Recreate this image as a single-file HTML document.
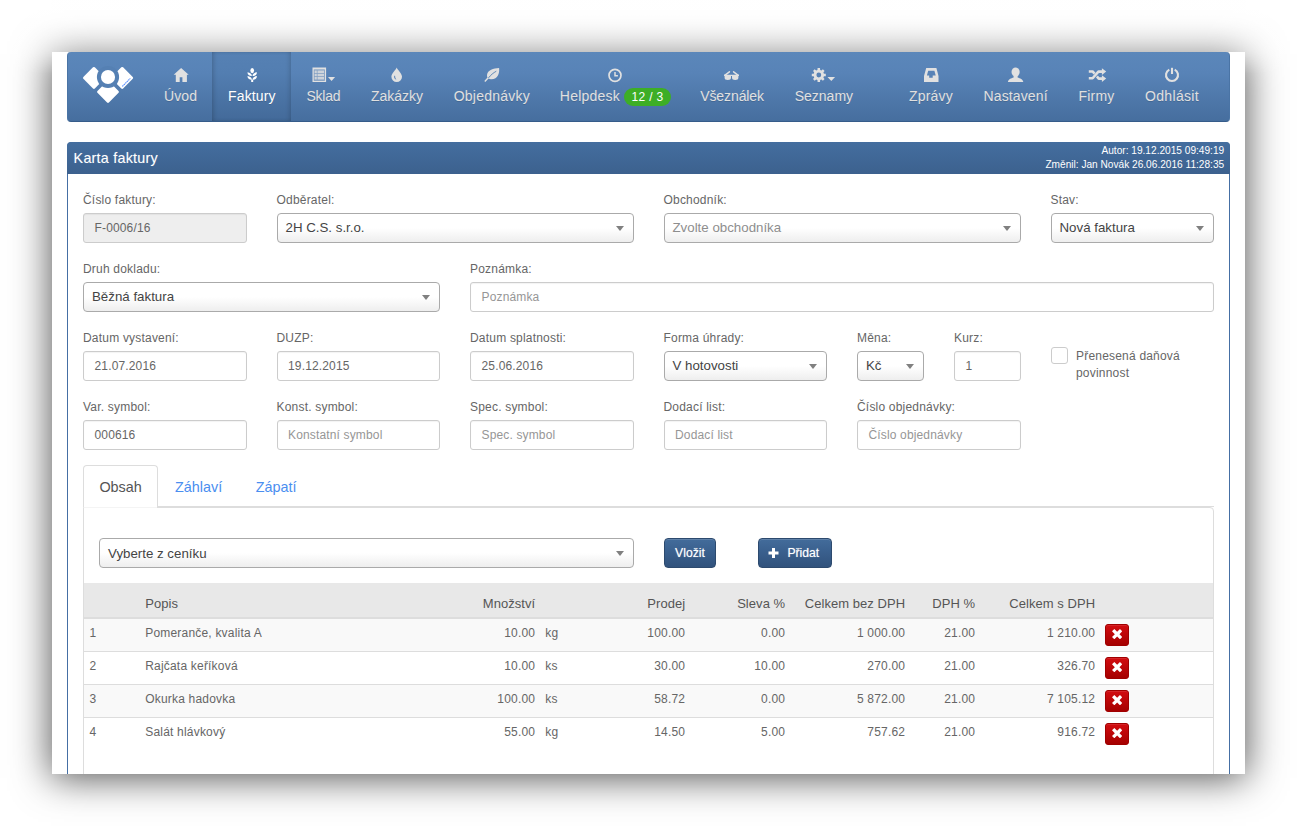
<!DOCTYPE html>
<html lang="cs">
<head>
<meta charset="utf-8">
<title>Karta faktury</title>
<style>
*{box-sizing:border-box;margin:0;padding:0}
html,body{width:1297px;height:826px;background:#fff;overflow:hidden}
body{font-family:"Liberation Sans",sans-serif;font-size:12px;color:#666;position:relative}
.frame{position:absolute;left:52px;top:52px;width:1193px;height:722px;background:#fff;overflow:hidden;z-index:2}
.shadow{position:absolute;left:52px;top:52px;width:1193px;height:722px;box-shadow:0 3px 36px 1px rgba(0,0,0,.68);z-index:0}
.toplight{position:absolute;left:0;top:0;width:1297px;height:74px;z-index:1;background:linear-gradient(to bottom,rgba(255,255,255,.7) 0,rgba(255,255,255,.5) 18px,rgba(255,255,255,.3) 30px,rgba(255,255,255,.27) 52px,rgba(255,255,255,0) 74px)}
.abs{position:absolute}
/* navbar */
.navbar{position:absolute;left:15px;top:0;width:1163px;height:69.5px;border-radius:4px;background:linear-gradient(to bottom,#5b87ba 0,#5883b7 30%,#466e9e 100%);border:1px solid #365c8a;border-top:0;border-left-color:#4a74a5;border-right-color:#4a74a5}
.badge{display:inline-block;position:relative;top:1px;background:#3dae26;color:#fff;border-radius:10px;font-size:12px;line-height:18px;height:18px;padding:0 7.5px;vertical-align:1px;margin-left:0;text-shadow:none;letter-spacing:.3px}
/* panel */
.panel{position:absolute;left:15px;top:90px;width:1163px;height:700px;border:1px solid #456fa4;border-radius:4px 4px 0 0}
.panel-heading{position:absolute;left:-1px;top:-1px;width:1163px;height:31.6px;border-radius:4px 4px 0 0;background:linear-gradient(to bottom,#446e9f 0,#3c618e 100%);color:#fff}
.panel-title{position:absolute;left:6.6px;top:6px;letter-spacing:.25px;font-size:14.3px;line-height:20px;color:#fff;text-shadow:0 0 1px rgba(255,255,255,.3)}
.panel-meta{position:absolute;right:5.8px;top:2.4px;text-align:right;font-size:10.15px;line-height:13.8px;color:#fff;white-space:nowrap}
/* form */
label.l{position:absolute;font-size:12px;letter-spacing:.2px;margin-top:.7px;line-height:16px;color:#666;white-space:nowrap;font-weight:normal}
.inp{position:absolute;letter-spacing:.15px;height:29.4px;border:1px solid #ccc;border-radius:3px;background:#fff;font-size:12px;line-height:28.7px;padding-left:10.5px;color:#666;white-space:nowrap;overflow:hidden;box-shadow:inset 0 1px 1px rgba(0,0,0,.05)}
.inp.dis{background:#eee}
.inp.ph{color:#969696}
.sel{position:absolute;height:29.4px;border:1px solid #aaa;border-radius:4px;background:linear-gradient(to bottom,#fff 50%,#eee 100%);font-size:13.3px;line-height:27px;padding-left:8px;color:#444;white-space:nowrap;overflow:hidden}
.sel.ph{color:#8e8e8e}
.sel:after{content:"";position:absolute;right:9px;top:12px;border-style:solid;border-width:5px 4px 0 4px;border-color:#808080 transparent transparent transparent}

/* grid helpers (frame coords = abs-52) */
.c1{left:31px}.c2{left:224.5px}.c3{left:418px}.c4{left:611.5px}.c5{left:805px}.c6{left:902px}.c7{left:998.5px}
.w1{width:66.75px}.w2{width:163.5px}.w4{width:357px}.w8{width:744px}
.i1{top:161.3px}.i2{top:230.3px}.i3{top:299.3px}.i4{top:368.3px}
.l1{top:139px}.l2{top:208.5px}.l3{top:277.5px}.l4{top:346.5px}

.chk{position:absolute;left:999px;top:295.3px;width:17px;height:17px;border:1px solid #ccc;border-radius:3px;background:#fff}
label.chkl{left:1024px;top:295.4px;line-height:17.4px}
/* tabs */
.tabline{position:absolute;left:31.4px;top:454px;width:1130.6px;height:1px;background:#ddd}
.tab{position:absolute;top:413px;height:42px;font-size:14.4px;line-height:20px;padding:11.5px 0 0 0;text-align:center;color:#4a8ef0;white-space:nowrap}
.tab.active{left:31.4px;width:74.4px;border:1px solid #ddd;border-bottom:0;border-radius:4px 4px 0 0;background:#fff;color:#555;padding-top:10.5px}
.tabbox{position:absolute;left:31.4px;top:455px;width:1130.6px;height:300px;border:1px solid #ddd;border-radius:0 4px 0 0}
.btn{position:absolute;top:486.3px;height:29.5px;border:1px solid #2d4a6e;border-radius:4px;background:linear-gradient(to bottom,#436c9b 0,#3a608e 45%,#31527c 100%);color:#fff;font-size:12.2px;line-height:28.5px;text-align:center;white-space:nowrap;text-shadow:0 0 1px rgba(255,255,255,.55);box-shadow:inset 0 1px 0 rgba(255,255,255,.15)}
/* table */
table.t{position:absolute;left:32.4px;top:531.3px;width:1128.8px;border-collapse:collapse;table-layout:fixed;font-size:12px;letter-spacing:.2px;color:#666}
table.t th{height:34.9px;background:#e8e8e8;border-bottom:2px solid #ddd;font-weight:normal;font-size:13px;letter-spacing:.05px;color:#555;padding:7px 5px 0 5px;text-align:right;white-space:nowrap}
table.t td{height:33.05px;border-top:1px solid #ddd;padding:0 5px 4px 5px;text-align:right;white-space:nowrap;vertical-align:middle;line-height:16px}
table.t tr.odd td{background:#f9f9f9}
table.t .tl{text-align:left}
.del{display:block;position:relative;width:24px;height:22px;margin-top:4.5px;border:1px solid #a00000;border-radius:3px;background:linear-gradient(to bottom,#d20c10 0,#a50000 100%);box-shadow:inset 0 1px 0 rgba(255,255,255,.1)}
.del svg{position:absolute;left:5.9px;top:3.7px;width:10.3px;height:10.3px;fill:#fff}

.navsvg{position:absolute;left:0;top:0;display:block}
.navact{position:absolute;left:160px;top:0;width:78.8px;height:69px;background:linear-gradient(to bottom,#5681b4 0,#537eb1 30%,#436a99 100%);box-shadow:inset 3px 0 5px -2px rgba(0,0,0,.22),inset -3px 0 5px -2px rgba(0,0,0,.18)}
.nl{position:absolute;top:34px;width:160px;text-align:center;font-size:14px;line-height:20px;color:#e0e0e0;white-space:nowrap;text-shadow:0 1px 0 rgba(0,0,0,.15)}
.nl.on{color:#fff}
</style>
</head>
<body>
<div class="shadow"></div>
<div class="toplight"></div>
<div class="frame">

<div class="navbar" id="navbar"></div>
<div class="navact"></div>
<svg class="navsvg" viewBox="52 52 1193 72" width="1193" height="72"><g fill="#fff"><rect x="-8.1" y="-8.1" width="16.2" height="16.2" rx="1.3" transform="translate(93.9,77.9) rotate(45)"/><rect x="-8.1" y="-8.1" width="16.2" height="16.2" rx="1.3" transform="translate(122.2,77.9) rotate(45)"/><rect x="-8.1" y="-8.1" width="16.2" height="16.2" rx="1.3" transform="translate(108,91.9) rotate(45)"/></g><circle cx="108" cy="77" r="11.1" fill="#5580b3"/><circle cx="108" cy="77" r="7.05" fill="#fff"/><path d="M122.3 86.4 L130.3 78.4" stroke="#4a86ff" stroke-width="1.1" stroke-dasharray="1.6 .5" fill="none"/><g transform="translate(173.7,67.9)" fill="#e1e1e1"><path d="M7.4 0 L15 6.9 H13.2 V14.1 H8.7 V9.4 H6 V14.1 H2.1 V6.9 H0Z"/></g><g transform="translate(247.9,67.9)" fill="#fff"><ellipse cx="4.3" cy="2.7" rx="1.85" ry="2.65"/><path d="M4.6 8.1 C4.6 6.2 6.5 4.6 9 4.4 C9.1 6.6 7.2 8.2 4.6 8.1Z M4 8.1 C4 6.2 2.1 4.6 -0.4 4.4 C-0.5 6.6 1.4 8.2 4 8.1Z M4.6 11.9 C4.6 10 6.5 8.4 9 8.2 C9.1 10.4 7.2 12 4.6 11.9Z M4 11.9 C4 10 2.1 8.4 -0.4 8.2 C-0.5 10.4 1.4 12 4 11.9Z M3.3 11.8 H5.3 V14.2 H3.3Z"/></g><g transform="translate(312.5,67.6)" fill="#e1e1e1"><path fill-rule="evenodd" d="M0 0 H13.6 V14.4 H0Z M1.3 2 V13.1 H12.3 V2Z"/><rect x="1.3" y="2" width="11" height="11.1" opacity=".3"/><path d="M2.1 2.9 H4.3 V5.3 H2.1Z M5 2.9 H11.5 V5.3 H5Z M2.1 6.2 H4.3 V8.6 H2.1Z M5 6.2 H11.5 V8.6 H5Z M2.1 9.5 H4.3 V11.9 H2.1Z M5 9.5 H11.5 V11.9 H5Z" opacity=".8"/><path d="M15.5 9.3 H22.6 L19.05 13.5Z"/></g><g transform="translate(391.4,67.4)" fill="#e1e1e1"><path fill-rule="evenodd" d="M5.3 0 C4.6 2.2 0 6 0 9.4 A5.3 5.2 0 0 0 10.6 9.4 C10.6 6 6 2.2 5.3 0Z M2.9 8.3 C2.3 10.2 3.2 11.9 5.2 12.2 C4.2 11.4 3.6 10 3.7 8.3Z"/></g><g transform="translate(484.3,67.9)"><path fill="#e1e1e1" d="M14.8 0 C15.4 5.2 13.6 11.6 6.6 11.3 C5.7 11.3 4.9 11 4.3 10.6 L1 14.1 L0 13.2 L3.2 9.6 C2.8 8.9 2.6 8 2.7 7 C3.3 2 9 0.2 14.8 0Z"/><path d="M4.2 10 C6.5 7 9 5 12 3.3" fill="none" stroke="#5480b3" stroke-width=".9"/></g><g fill="none" stroke="#e1e1e1"><circle cx="615" cy="75.3" r="6" stroke-width="1.7"/><path d="M615 71.9 V75.7 H617.9" stroke-width="1.5"/></g><g transform="translate(724,71)" fill="#e1e1e1"><path d="M0 3.7 H15 V5 H14.4 V6.5 C14.4 8.3 13.3 9 11.2 9 C9.1 9 8 8.3 8 6.5 V5 H7 V6.5 C7 8.3 5.9 9 3.8 9 C1.7 9 0.6 8.3 0.6 6.5 V5 H0Z"/><path d="M0.7 4.3 L5.4 0.8 M14.3 4.3 L9.6 0.8" fill="none" stroke="#e1e1e1" stroke-width="1.5" stroke-linecap="round"/></g><path fill="#e1e1e1" fill-rule="evenodd" d="M817.44 69.88 L817.60 68.00 L820.00 68.00 L820.16 69.88 L821.46 70.41 L822.90 69.20 L824.60 70.90 L823.39 72.34 L823.92 73.64 L825.80 73.80 L825.80 76.20 L823.92 76.36 L823.39 77.66 L824.60 79.10 L822.90 80.80 L821.46 79.59 L820.16 80.12 L820.00 82.00 L817.60 82.00 L817.44 80.12 L816.14 79.59 L814.70 80.80 L813.00 79.10 L814.21 77.66 L813.68 76.36 L811.80 76.20 L811.80 73.80 L813.68 73.64 L814.21 72.34 L813.00 70.90 L814.70 69.20 L816.14 70.41Z M816.40 75.00 a2.4 2.4 0 1 0 4.8 0 a2.4 2.4 0 1 0 -4.8 0Z"/><path fill="#e1e1e1" d="M827.5 76.9 H835.1 L831.3 81Z"/><g transform="translate(923.9,67.6)" fill="#e1e1e1"><path fill-rule="evenodd" d="M2.3 0.4 H12.5 L14.6 8.4 V14.5 H0.1 V8.4Z M4.3 3.1 H10.5 L11.8 7.8 H8.8 V10.2 H5.3 V7.8 H3Z"/></g><g transform="translate(1007.9,67.6)" fill="#e1e1e1"><ellipse cx="7.7" cy="4.5" rx="4.1" ry="4.6"/><path d="M5.7 8 V10 C3.2 11 0.5 11.6 0 14.4 H15.4 C14.9 11.6 12.2 11 9.7 10 V8Z"/></g><g transform="translate(1088.8,68.25)" fill="#e1e1e1"><path d="M0 10 H3.8 L9.6 3.35 H13.5 M0 3.2 H3.8 L5.7 5.3 M8.1 8.2 L9.9 10.35 H13.5" fill="none" stroke="#e1e1e1" stroke-width="2.6" stroke-linejoin="round"/><path d="M13.1 -0.1 L17.4 3.35 L13.1 6.8Z M13.1 6.9 L17.4 10.35 L13.1 13.8Z"/></g><g fill="none" stroke="#e1e1e1" stroke-width="2.1"><path d="M1174.7 69.65 A6 6 0 1 1 1169.3 69.65"/><path d="M1172 67.8 V74"/></g></svg>
<div class="nl" style="left:48.5px;letter-spacing:0.1px">Úvod</div>
<div class="nl on" style="left:119.9px;letter-spacing:0.14px">Faktury</div>
<div class="nl" style="left:191.4px;letter-spacing:-0.22px">Sklad</div>
<div class="nl" style="left:265.0px">Zakázky</div>
<div class="nl" style="left:359.9px;letter-spacing:0.24px">Objednávky</div>
<div class="nl" style="left:483.4px;letter-spacing:.22px">Helpdesk <span class="badge">12 / 3</span></div>
<div class="nl" style="left:600.1px;letter-spacing:-0.09px">Všeználek</div>
<div class="nl" style="left:691.9px">Seznamy</div>
<div class="nl" style="left:799.0px;letter-spacing:0.22px">Zprávy</div>
<div class="nl" style="left:883.6px;letter-spacing:0.13px">Nastavení</div>
<div class="nl" style="left:964.5px;letter-spacing:0.18px">Firmy</div>
<div class="nl" style="left:1040.0px;letter-spacing:0.31px">Odhlásit</div>

<div class="panel">
  <div class="panel-heading">
    <div class="panel-title">Karta faktury</div>
    <div class="panel-meta">Autor: 19.12.2015 09:49:19<br>Změnil: Jan Novák 26.06.2016 11:28:35</div>
  </div>
</div>
<div id="form">
<!-- row 1 -->
<label class="l c1 l1">Číslo faktury:</label>
<div class="inp dis c1 i1 w2">F-0006/16</div>
<label class="l c2 l1">Odběratel:</label>
<div class="sel c2 i1 w4">2H C.S. s.r.o.</div>
<label class="l c4 l1">Obchodník:</label>
<div class="sel ph c4 i1 w4">Zvolte obchodníka</div>
<label class="l c7 l1">Stav:</label>
<div class="sel c7 i1 w2">Nová faktura</div>
<!-- row 2 -->
<label class="l c1 l2">Druh dokladu:</label>
<div class="sel c1 i2 w4">Běžná faktura</div>
<label class="l c3 l2">Poznámka:</label>
<div class="inp ph c3 i2 w8">Poznámka</div>
<!-- row 3 -->
<label class="l c1 l3">Datum vystavení:</label>
<div class="inp c1 i3 w2">21.07.2016</div>
<label class="l c2 l3">DUZP:</label>
<div class="inp c2 i3 w2">19.12.2015</div>
<label class="l c3 l3">Datum splatnosti:</label>
<div class="inp c3 i3 w2">25.06.2016</div>
<label class="l c4 l3">Forma úhrady:</label>
<div class="sel c4 i3 w2">V hotovosti</div>
<label class="l c5 l3">Měna:</label>
<div class="sel c5 i3 w1">Kč</div>
<label class="l c6 l3">Kurz:</label>
<div class="inp c6 i3 w1">1</div>
<div class="chk"></div>
<label class="l chkl">Přenesená daňová<br>povinnost</label>
<!-- row 4 -->
<label class="l c1 l4">Var. symbol:</label>
<div class="inp c1 i4 w2">000616</div>
<label class="l c2 l4">Konst. symbol:</label>
<div class="inp ph c2 i4 w2">Konstatní symbol</div>
<label class="l c3 l4">Spec. symbol:</label>
<div class="inp ph c3 i4 w2">Spec. symbol</div>
<label class="l c4 l4">Dodací list:</label>
<div class="inp ph c4 i4 w2">Dodací list</div>
<label class="l c5 l4">Číslo objednávky:</label>
<div class="inp ph c5 i4 w2">Číslo objednávky</div>

<!-- tabs -->
<div class="tabbox"></div>
<div class="tabline"></div>
<div class="tab active">Obsah</div>
<div class="abs" style="left:32.4px;top:455px;width:72.4px;height:1px;background:#f4f4f4"></div>
<div class="tab" style="left:107.6px;width:78px">Záhlaví</div>
<div class="tab" style="left:187.8px;width:72.5px">Zápatí</div>
<div class="sel" style="left:47px;top:486.2px;width:535px;height:29.5px;line-height:29.5px">Vyberte z ceníku</div>
<div class="btn" style="left:612px;width:52px">Vložit</div>
<div class="btn" style="left:706px;width:74px"><svg viewBox="0 0 12 12" style="width:11px;height:10px;fill:#fff;margin-right:8.6px;margin-left:-3px;vertical-align:-1px"><path d="M4.2 0 H7.8 V4.2 H12 V7.8 H7.8 V12 H4.2 V7.8 H0 V4.2 H4.2 Z"/></svg>Přidat</div>
<table class="t"><colgroup><col style="width:55.8px"><col style="width:300px"><col style="width:100px"><col style="width:50px"><col style="width:100px"><col style="width:100px"><col style="width:120px"><col style="width:70px"><col style="width:120px"><col style="width:113px"></colgroup>
<thead><tr><th></th><th class="tl">Popis</th><th>Množství</th><th></th><th>Prodej</th><th>Sleva %</th><th>Celkem bez DPH</th><th>DPH %</th><th>Celkem s DPH</th><th></th></tr></thead>
<tbody>
<tr class="odd"><td class="tl">1</td><td class="tl">Pomeranče, kvalita A</td><td>10.00</td><td class="tl">kg</td><td>100.00</td><td>0.00</td><td>1 000.00</td><td>21.00</td><td>1 210.00</td><td class="tl"><span class="del"><svg viewBox="0 0 12 12"><path d="M2.7 0 L6 3.3 L9.3 0 L12 2.7 L8.7 6 L12 9.3 L9.3 12 L6 8.7 L2.7 12 L0 9.3 L3.3 6 L0 2.7Z"/></svg></span></td></tr>
<tr><td class="tl">2</td><td class="tl">Rajčata keříková</td><td>10.00</td><td class="tl">ks</td><td>30.00</td><td>10.00</td><td>270.00</td><td>21.00</td><td>326.70</td><td class="tl"><span class="del"><svg viewBox="0 0 12 12"><path d="M2.7 0 L6 3.3 L9.3 0 L12 2.7 L8.7 6 L12 9.3 L9.3 12 L6 8.7 L2.7 12 L0 9.3 L3.3 6 L0 2.7Z"/></svg></span></td></tr>
<tr class="odd"><td class="tl">3</td><td class="tl">Okurka hadovka</td><td>100.00</td><td class="tl">ks</td><td>58.72</td><td>0.00</td><td>5 872.00</td><td>21.00</td><td>7 105.12</td><td class="tl"><span class="del"><svg viewBox="0 0 12 12"><path d="M2.7 0 L6 3.3 L9.3 0 L12 2.7 L8.7 6 L12 9.3 L9.3 12 L6 8.7 L2.7 12 L0 9.3 L3.3 6 L0 2.7Z"/></svg></span></td></tr>
<tr><td class="tl">4</td><td class="tl">Salát hlávkový</td><td>55.00</td><td class="tl">kg</td><td>14.50</td><td>5.00</td><td>757.62</td><td>21.00</td><td>916.72</td><td class="tl"><span class="del"><svg viewBox="0 0 12 12"><path d="M2.7 0 L6 3.3 L9.3 0 L12 2.7 L8.7 6 L12 9.3 L9.3 12 L6 8.7 L2.7 12 L0 9.3 L3.3 6 L0 2.7Z"/></svg></span></td></tr>
</tbody></table>
</div>

</div>
</body>
</html>
